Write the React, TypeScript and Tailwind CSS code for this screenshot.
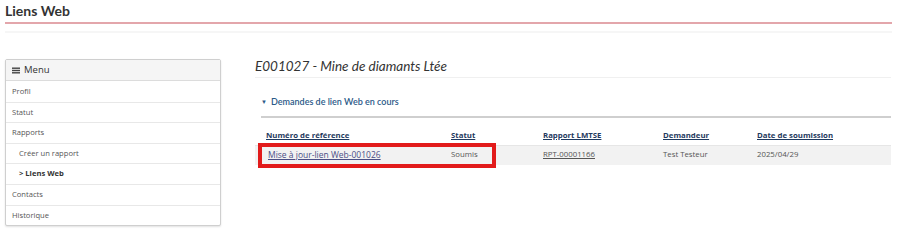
const menuItems = [
  { label: 'Profil', sub: false, active: false },
  { label: 'Statut', sub: false, active: false },
  { label: 'Rapports', sub: false, active: false },
  { label: 'Créer un rapport', sub: true, active: false },
  { label: '> Liens Web', sub: true, active: true },
  { label: 'Contacts', sub: false, active: false },
  { label: 'Historique', sub: false, active: false },
]

const cols = 'grid grid-cols-[185px_92px_120px_94px_1fr]'

function SideMenu() {
  return (
    <div className="w-[216px] shrink-0 rounded-[2px] border border-[#cfcfcf] shadow-[0_1px_2px_rgba(0,0,0,0.12)] bg-white">
      <div className="h-[21px] flex items-center gap-[4px] px-[6px] bg-[#f5f5f5] border-b border-[#dcdcdc] text-[9.5px] text-[#333]">
        <svg width="8" height="7" viewBox="0 0 8 7">
          <rect x="0" y="0.5" width="8" height="1.4" fill="#444" />
          <rect x="0" y="2.8" width="8" height="1.4" fill="#444" />
          <rect x="0" y="5.1" width="8" height="1.4" fill="#444" />
        </svg>
        <span>Menu</span>
      </div>
      {menuItems.map((item, i) => (
        <div
          key={item.label}
          className={`h-[20.6px] flex items-center text-[7.6px] ${i > 0 ? 'border-t border-[#e8e8e8]' : ''} ${
            item.sub ? 'pl-[13px]' : 'pl-[6px]'
          } ${item.active ? 'font-bold text-[#333]' : 'text-[#555]'}`}
        >
          {item.label}
        </div>
      ))}
    </div>
  )
}

export default function App() {
  return (
    <div className="w-[897px] h-[249px] bg-white font-['Open_Sans',sans-serif] overflow-hidden">
      <div className="px-[5px] pt-[2px]">
        <h1 className="font-['Lato',sans-serif] font-bold text-[14px] leading-[18px] text-[#333]">Liens Web</h1>
        <div className="mt-[2px] h-[2px] bg-[#e3a6ab]" />
        <div className="mt-[7px] h-[2px] bg-[#f6f6f6]" />
      </div>

      <div className="flex mt-[26px] pl-[5px]">
        <SideMenu />

        <div className="ml-[34px] w-[636px] -mt-[1px]">
          <div className="pb-[2px] border-b border-[#f0f0f0]">
            <h2 className="font-['Lato',sans-serif] italic text-[13.5px] leading-[17px] text-[#333]">
              E001027 - Mine de diamants Ltée
            </h2>
          </div>

          <div className="ml-[6px] mt-[17px] flex items-center gap-[4px] font-['Lato',sans-serif] font-semibold text-[9px] text-[#2b5a88]">
            <span className="text-[6px]">▼</span>
            <span>Demandes de lien Web en cours</span>
          </div>
          <div className="ml-[6px] mt-[7px] h-[2px] bg-[#cfcfcf]" />

          <div className="relative mt-[12px] text-[7.8px]">
            <div className={`${cols} pl-[11px] h-[13px] items-center font-bold text-[#1f3a60]`}>
              <span className="underline">Numéro de référence</span>
              <span className="underline">Statut</span>
              <span className="underline">Rapport LMTSE</span>
              <span className="underline">Demandeur</span>
              <span className="underline">Date de soumission</span>
            </div>
            <div className={`${cols} pl-[11px] mt-[2px] h-[20px] items-center bg-[#f2f2f2] text-[#555] border-t border-[#e6e6e6]`}>
              <span className="pl-[2px] text-[8.5px] underline text-[#4a4f86]">Mise à jour-lien Web-001026</span>
              <span>Soumis</span>
              <span className="underline">RPT-00001166</span>
              <span>Test Testeur</span>
              <span>2025/04/29</span>
            </div>
            <div className="absolute left-[3px] top-[13px] w-[238px] h-[25px] border-[4px] border-[#e21b1b]" />
          </div>
        </div>
      </div>
    </div>
  )
}
